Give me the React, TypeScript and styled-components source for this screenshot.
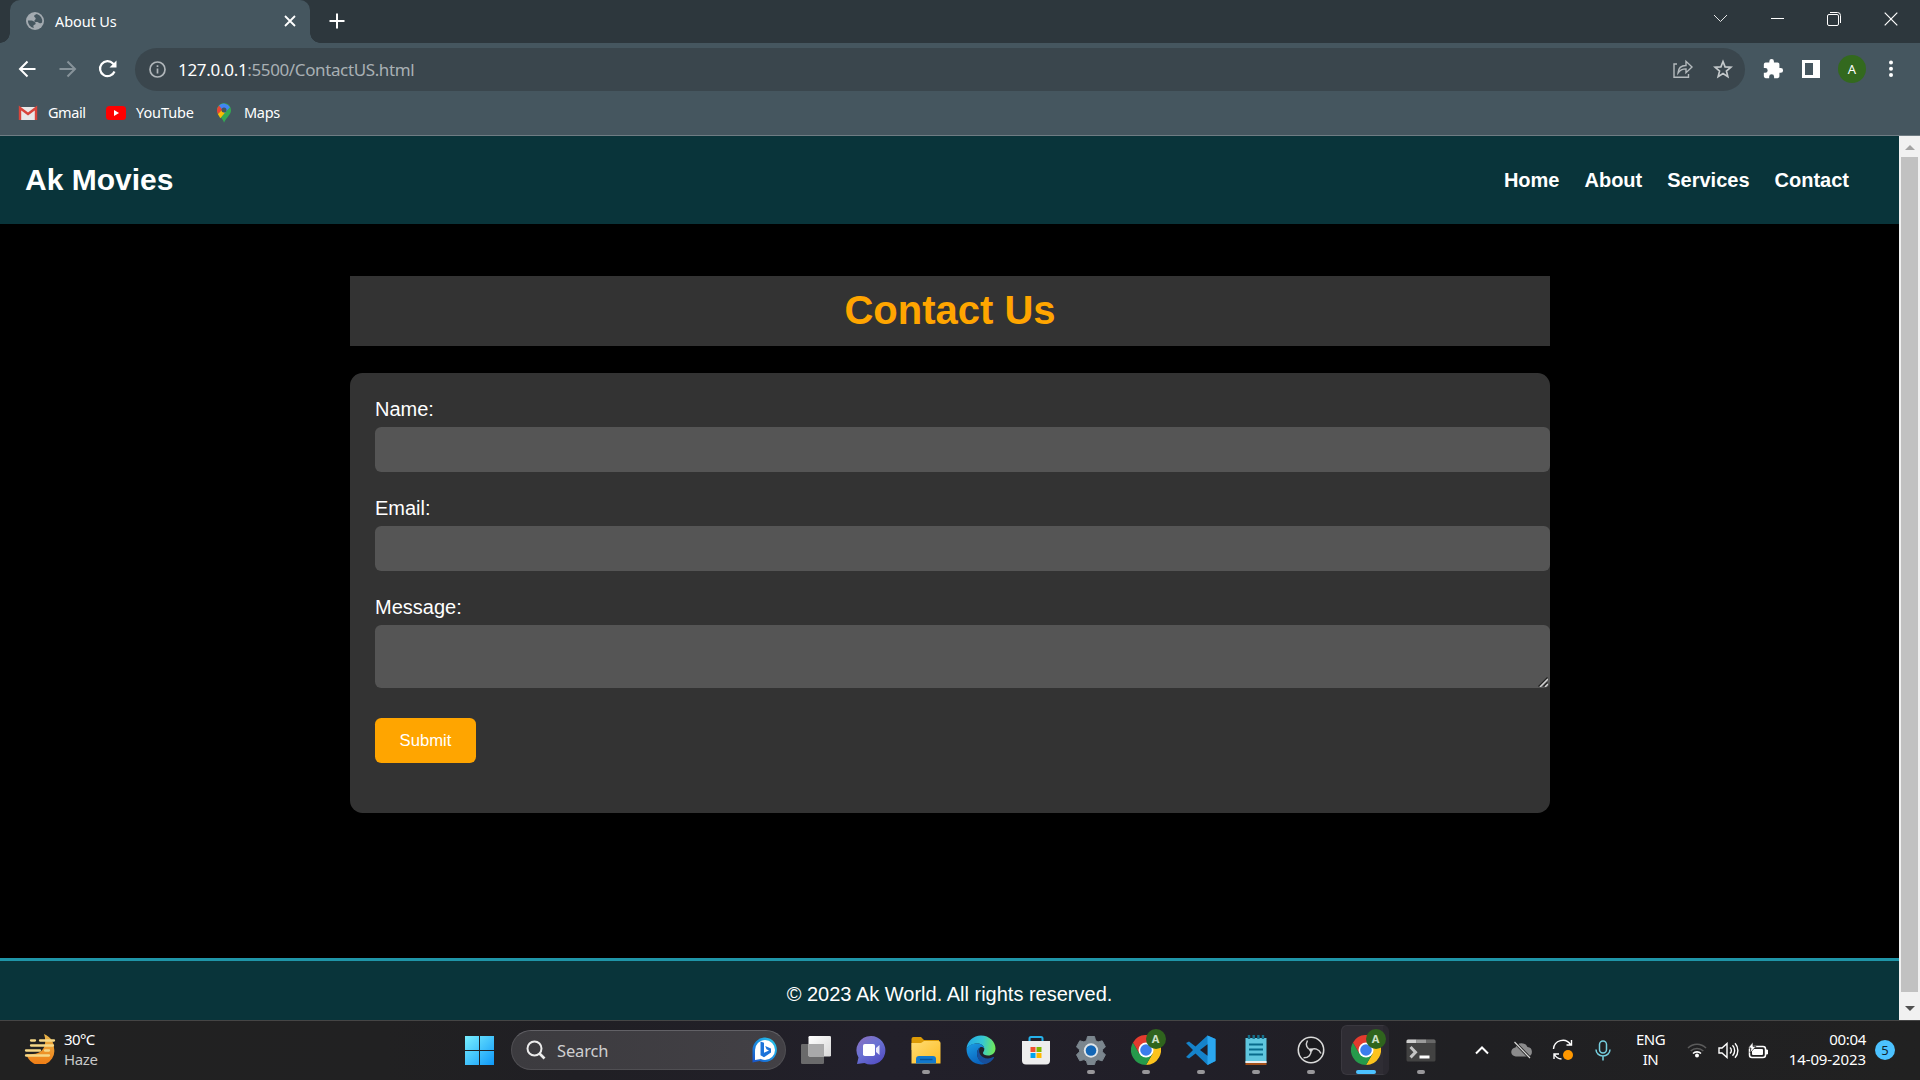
import React from "react";
import styled, { createGlobalStyle } from "styled-components";

const ui = `"Noto Sans", "Open Sans", sans-serif`;
const arial = `"Liberation Sans", Arial, sans-serif`;

const Global = createGlobalStyle`
  html, body, #root { margin: 0; height: 100%; background: #000; overflow: hidden; }
  *, *::before, *::after { box-sizing: border-box; }
  svg { display: block; flex: none; }
`;

const Screen = styled.div`
  width: 1920px;
  height: 1080px;
  display: flex;
  flex-direction: column;
  overflow: hidden;
  font-family: ${ui};
`;

const Text = styled.span<{ $size: number; $track?: number; $color?: string; $line?: number; $lift?: number }>`
  font-size: ${(p) => p.$size}px;
  letter-spacing: ${(p) => p.$track ?? 0}px;
  color: ${(p) => p.$color ?? "#fff"};
  line-height: ${(p) => p.$line ?? 20}px;
  margin-top: ${(p) => -(p.$lift ?? 0)}px;
  white-space: nowrap;
`;

/* Browser chrome */
const TabStrip = styled.div`
  height: 43px;
  flex: none;
  display: flex;
  align-items: stretch;
  background: #2d373d;
`;
const TabCurve = styled.span<{ $side: "left" | "right" }>`
  width: 10px;
  height: 10px;
  align-self: flex-end;
  background: radial-gradient(circle at ${(p) => (p.$side === "left" ? "0 0" : "100% 0")}, transparent 9.5px, #45565f 10px);
`;
const Tab = styled.div`
  width: 300px;
  border-radius: 10px 10px 0 0;
  background: #45565f;
  display: flex;
  align-items: center;
  padding: 0 14px 1px 16px;
`;
const TabTitle = styled.div`
  flex: 1;
  display: flex;
  padding-left: 11px;
`;
const NewTab = styled.div`
  display: flex;
  align-items: center;
  padding: 0 0 1px 9px;
`;
const WindowButtons = styled.div`
  margin-left: auto;
  display: flex;
  height: 37px;
  align-items: center;
  padding-right: 22px;
  gap: 43px;
`;
const Toolbar = styled.div`
  height: 52px;
  flex: none;
  display: flex;
  align-items: center;
  background: #45565f;
  padding: 0 0 0 17px;
`;
const NavButtons = styled.div`
  width: 118px;
  display: flex;
  gap: 18px;
  padding-bottom: 1px;
`;
const Omnibox = styled.div`
  width: 1610px;
  height: 43px;
  border-radius: 22px;
  background: #3a464d;
  display: flex;
  align-items: center;
  padding: 0 12px 0 14px;
`;
const Url = styled.div`
  display: flex;
  padding: 1px 0 0 12px;
  flex: 1;
`;
const OmniActions = styled.div`
  display: flex;
  align-items: center;
  gap: 20px;
`;
const ToolActions = styled.div`
  display: flex;
  align-items: center;
  padding-left: 17px;
`;
const ToolIcon = styled.span<{ $gap: number }>`
  margin-right: ${(p) => p.$gap}px;
`;
const Avatar = styled.span`
  width: 28px;
  height: 28px;
  border-radius: 50%;
  background: #33691e;
  display: flex;
  align-items: center;
  justify-content: center;
  margin: 0 16px 0 17px;
`;
const Bookmarks = styled.div`
  height: 41px;
  flex: none;
  background: #45565f;
  border-bottom: 1px solid #6f7c83;
  display: flex;
  align-items: center;
  padding: 0 0 5px 18px;
`;
const Bookmark = styled.div<{ $width: number }>`
  width: ${(p) => p.$width}px;
  display: flex;
  align-items: center;
  gap: 10px;
`;

/* Web page */
const Viewport = styled.div`
  height: 884px;
  flex: none;
  display: flex;
  background: #000;
`;
const Page = styled.div`
  width: 1899px;
  display: flex;
  flex-direction: column;
  font-family: ${arial};
  color: #fff;
`;
const SiteHeader = styled.header`
  height: 88px;
  background: #09343a;
  display: flex;
  align-items: center;
  justify-content: space-between;
  padding: 0 50px 0 25px;
`;
const Brand = styled.h1`
  margin: 0;
  font-size: 30px;
  line-height: 36px;
`;
const Menu = styled.nav`
  display: flex;
  gap: 25px;
`;
const MenuLink = styled.a`
  font-size: 20px;
  font-weight: 700;
  line-height: 24px;
  color: #fff;
`;
const Main = styled.main`
  flex: 1;
  width: 1200px;
  margin-left: 350px;
  padding-top: 52px;
`;
const PageTitle = styled.h2`
  margin: 0 0 27px;
  height: 70px;
  background: #333;
  color: orange;
  font-size: 40px;
  line-height: 69px;
  text-align: center;
`;
const Form = styled.form`
  height: 440px;
  border-radius: 12.5px;
  background: #333;
  padding: 25px 0 0 25px;
  display: flex;
  flex-direction: column;
  align-items: flex-start;
`;
const Label = styled.label`
  font-size: 20px;
  line-height: 23px;
  margin-bottom: 6px;
`;
const Input = styled.input`
  width: 1175px;
  height: 45px;
  border: 0;
  border-radius: 6.25px;
  background: #555;
  margin: 0 0 25px;
`;
const MessageField = styled.div`
  position: relative;
  height: 63px;
  margin-bottom: 30px;
`;
const MessageBox = styled.textarea`
  display: block;
  width: 1175px;
  height: 63px;
  border: 0;
  border-radius: 6.25px;
  background: #555;
  margin: 0;
  resize: none;
`;
const Grip = styled.svg`
  position: absolute;
  right: 2px;
  bottom: 1px;
`;
const Submit = styled.button`
  width: 101px;
  height: 45px;
  border: 0;
  padding: 0;
  border-radius: 6.25px;
  background: orange;
  color: #fff;
  font: 16.67px ${arial};
`;
const SiteFooter = styled.footer`
  height: 62px;
  border-top: 3px solid #1f95a8;
  background: #09343a;
  font-size: 20px;
  line-height: 23px;
  padding-top: 22px;
  text-align: center;
`;
const Scrollbar = styled.div`
  width: 21px;
  background: #f1f1f1;
  display: flex;
  flex-direction: column;
  align-items: center;
  padding-right: 0;
`;
const ScrollArrow = styled.span<{ $h: number; $drop?: number }>`
  height: ${(p) => p.$h}px;
  display: flex;
  align-items: center;
  padding-top: ${(p) => p.$drop ?? 0}px;
`;
const Thumb = styled.span`
  width: 17px;
  height: 835px;
  background: #c1c1c1;
`;

/* Taskbar */
const Taskbar = styled.div`
  height: 60px;
  flex: none;
  border-top: 1px solid #454545;
  background: linear-gradient(90deg, #212121 0, #212122 20%, #201f24 30%, #22202a 46%, #211f28 62%, #202023 76%, #212121 100%);
  display: flex;
`;
const Weather = styled.div`
  width: 464px;
  display: flex;
  padding: 8px 0 0 24px;
  gap: 8px;
`;
const WeatherIcon = styled.span`
  padding-top: 3px;
`;
const Stack = styled.div<{ $align: string }>`
  display: flex;
  flex-direction: column;
  align-items: ${(p) => p.$align};
`;
const StartSlot = styled.div`
  width: 47px;
  padding-top: 14px;
`;
const SearchBox = styled.div`
  width: 275px;
  height: 40px;
  margin-top: 9px;
  border-radius: 20px;
  background: linear-gradient(90deg, #3c3b3f, #424045);
  border: 1px solid #504f53;
  border-top-color: #626166;
  display: flex;
  align-items: center;
  padding: 0 7px 0 14px;
`;
const SearchLabel = styled.div`
  flex: 1;
  display: flex;
  padding: 2px 0 0 11px;
`;
const Apps = styled.div`
  display: flex;
  padding-left: 2px;
`;
const AppButton = styled.div`
  position: relative;
  width: 55px;
  display: flex;
  flex-direction: column;
  align-items: center;
  padding-top: 14px;
`;
const ActivePlate = styled.span`
  position: absolute;
  left: 3px;
  top: 4px;
  width: 48px;
  height: 50px;
  border-radius: 6px;
  background: #2f2d34;
  border: 1px solid #3a383f;
  border-right: 6px solid #2b2930;
`;
const AppIcon = styled.span`
  position: relative;
  height: 35px;
`;
const ProfileBadge = styled.span`
  position: absolute;
  left: 15px;
  top: -6px;
  width: 20px;
  height: 20px;
  border-radius: 50%;
  background: #2f641d;
  color: #cfe0ca;
  font: 700 11px/20px ${ui};
  text-align: center;
`;
const Indicator = styled.span<{ $active?: boolean }>`
  position: relative;
  width: ${(p) => (p.$active ? 20 : 8)}px;
  height: 4px;
  border-radius: 2px;
  background: ${(p) => (p.$active ? "#4cc2ff" : "#98979a")};
`;
const Tray = styled.div`
  margin-left: auto;
  display: flex;
  height: 58px;
  align-items: center;
  padding-right: 25px;
`;
const TrayItem = styled.div<{ $width: number }>`
  width: ${(p) => p.$width}px;
  display: flex;
  justify-content: center;
`;
const Clock = styled.div`
  width: 91px;
  display: flex;
  flex-direction: column;
  align-items: flex-end;
  padding-right: 0;
`;
const TrayText = styled.div`
  height: 42px;
`;
const Notice = styled.span`
  width: 20px;
  height: 20px;
  margin-left: 9px;
  border-radius: 50%;
  background: #4cc2ff;
  color: #10242e;
  font: 13px/20px ${ui};
  text-align: center;
`;

const Globe = () => (
  <svg width="18" height="18" viewBox="0 0 18 18">
    <circle cx="9" cy="9" r="9" fill="#a3aab0" />
    <path d="M10.500 2c-1.500.4-2.800 1.200-2.600 2.500.1 1 1.700 1.100 1.500 2.300-.2 1.200-1.500 1.300-1.400 2.500.1 1 1.600.6 3 .8 1.300.2 1.500 1.300 2.800 1.200.9 0 1.600-.5 2-.8A7.200 7.200 0 0 0 10.500 2z" fill="#45565f" transform="translate(.3 0)" />
    <path d="M1.900 8.600h3.600c1.500 0 2 1 3 1.400 1 .4 1.400 1.100 1 2-.4.8-1.600.7-2 1.500-.3.700-.1 1.500.5 2.500A7.200 7.200 0 0 1 1.900 8.600z" fill="#45565f" />
  </svg>
);
const Chrome = () => (
  <svg width="30" height="30" viewBox="0 0 48 48">
    <path d="M24 12h20.800A24 24 0 0 1 24 48l10.400-18z" fill="#fcc31e" />
    <path d="M34.400 30 24 48A24 24 0 0 1 3.200 12l10.400 18z" fill="#269a4b" />
    <path d="M13.600 30 3.200 12A24 24 0 0 1 44.800 12H24z" fill="#e33b2e" />
    <circle cx="24" cy="24" r="12" fill="#fff" />
    <circle cx="24" cy="24" r="9.300" fill="#3b7ded" />
  </svg>
);
const Folder = () => (
  <svg width="30" height="30" viewBox="0 0 30 30">
    <path d="M.5 4a2 2 0 0 1 2-2h7.500l3 3H28v10H.5z" fill="#dc9a06" />
    <path d="M.5 8H10l3-2h14.500a2 2 0 0 1 2 2v20.500H.5z" fill="url(#fold)" />
    <path d="M5 28.500V24a3 3 0 0 1 3-3h14a3 3 0 0 1 3 3v4.500z" fill="#1279cc" />
    <path d="M9 24.500h12.500" stroke="#07549b" strokeWidth="1.400" />
    <defs><linearGradient id="fold" x1="0" y1="0" x2="1" y2="1"><stop stopColor="#ffdc75" /><stop offset="1" stopColor="#fdbd23" /></linearGradient></defs>
  </svg>
);
const Edge = () => (
  <svg width="30" height="30" viewBox="0 0 30 30">
    <defs>
      <linearGradient id="e1" x1="0" y1=".3" x2="1" y2=".4"><stop stopColor="#22a8e6" /><stop offset=".55" stopColor="#35c7d4" /><stop offset="1" stopColor="#70ea58" /></linearGradient>
      <linearGradient id="e2" x1="0" y1="0" x2=".5" y2="1"><stop stopColor="#1a9de4" /><stop offset="1" stopColor="#0a63bd" /></linearGradient>
    </defs>
    <path d="M.5 14C1 6 7.500.5 15 .5c8.500 0 14.500 6.500 14.500 13 0 4.500-3.500 7-7.500 7-3 0-5-1-5-2.500 0-1 1.300-1.600 1.300-4 0-3-3-5.500-6.800-5.500C6 8.500 2 11 .5 14z" fill="url(#e1)" />
    <path d="M.5 14C2 10.500 6 8.500 11.500 8.500c4 0 6.800 2.500 6.800 5.500-1-2-3-2.400-4.300-1.500-2 1.200-3 3.500-3 6 0 5.500 4.500 9.500 9.500 10-10 3.500-20-3.500-20-14.500z" fill="url(#e2)" />
    <path d="M11 18.500c0-2.400 1-4.800 3-6-2.500 4 .5 11 8 11 2 0 3.600-.6 5-1.400.7-.4 1.300.2.900.9A14.500 14.500 0 0 1 20 29c-5-.5-9-5-9-10.500z" fill="#174f9c" />
  </svg>
);
const Store = () => (
  <svg width="30" height="30" viewBox="0 0 30 30">
    <path d="M8.500 7V3.500A1.500 1.500 0 0 1 10 2h10a1.500 1.500 0 0 1 1.500 1.500V7" fill="none" stroke="#25b1ea" strokeWidth="2" />
    <path d="M1 6h28v19.500a4 4 0 0 1-4 4H5a4 4 0 0 1-4-4z" fill="#ededed" />
    <path d="M9.500 12h5v5h-5z" fill="#f1502f" /><path d="M15.500 12h5v5h-5z" fill="#7fb900" />
    <path d="M9.500 18h5v5h-5z" fill="#00a3ee" /><path d="M15.500 18h5v5h-5z" fill="#ffb800" />
  </svg>
);
const Gear = () => (
  <svg width="30" height="30" viewBox="0 0 30 30">
    <path d="M11.500 1.500h7l1 4 2.500 1.500 4.200-1.200 3.200 6-3 3v2l3 3-3.200 6-4.200-1.200-2.500 1.500-1 3.400h-7l-1-3.400L8 24.600l-4.200 1.200-3.300-6 3-3v-2l-3-3 3.300-6L8 7l2.500-1.500z" fill="#7b868e" stroke="#7b868e" strokeLinejoin="round" />
    <circle cx="15" cy="15.500" r="7.200" fill="#dfe5e9" /><circle cx="15" cy="15.500" r="5.300" fill="#1366b5" />
  </svg>
);
const Code = () => (
  <svg width="30" height="30" viewBox="0 0 30 30">
    <path d="M21.500.5 29.500 4v22l-8 4L9.500 18.500 3 23.500 0 22l7-7-7-7 3-1.500 6.500 5z" fill="#1583ca" />
    <path d="M21.500.5 29.500 4v22l-8 4z" fill="#2ba7ef" />
    <path d="M21.500 9.300 14 15l7.500 5.700z" fill="#211f28" />
  </svg>
);
const Notepad = () => (
  <svg width="30" height="30" viewBox="0 0 30 30">
    <path d="M4.500 3h21v25h-21z" fill="#5fc6de" />
    <path d="M4.500 26h21v2h-21z" fill="#e8edf0" /><path d="M4.500 28h21v2h-21z" fill="#a4501a" />
    <path d="M8 0v4M12.700 0v4M17.400 0v4M22 0v4" stroke="#15708c" strokeWidth="2.400" />
    <path d="M8 9.500h14M8 14.500h14M8 19.500h14" stroke="#086b8b" strokeWidth="2" />
  </svg>
);
const Obs = () => (
  <svg width="30" height="30" viewBox="0 0 30 30">
    <circle cx="15" cy="15" r="12.700" fill="#1b1b1e" stroke="#dadada" strokeWidth="1.600" />
    <g fill="none" stroke="#d2d2d2" strokeWidth="1.500">
      <path d="M15 15c-4-1-6-5-3.500-9.500" /><path d="M15 15c3.500-2.500 8-1 10 3.500" /><path d="M15 15c.7 4.500-2.500 8-7.500 7.800" />
    </g>
    <circle cx="15" cy="15" r="1.800" fill="#dadada" />
  </svg>
);
const Terminal = () => (
  <svg width="30" height="30" viewBox="0 0 30 30">
    <rect x=".5" y="4.500" width="29" height="22" rx="1.500" fill="#424242" />
    <path d="M.5 8V6A1.500 1.500 0 0 1 2 4.500h8.500V8z" fill="#cfcfcf" /><path d="M10.500 4.500H20V8h-9.500z" fill="#9a9a9a" /><path d="M20 4.500h8A1.500 1.500 0 0 1 29.500 6v2H20z" fill="#686868" />
    <path d="m4.500 12 5 5.200-5 5.200" fill="none" stroke="#c4c4c4" strokeWidth="3" /><path d="M13.500 20.500h10v3h-10z" fill="#fff" />
  </svg>
);
const TaskView = () => (
  <svg width="30" height="30" viewBox="0 0 30 30">
    <defs><linearGradient id="tv" x1="0" y1="0" x2="1" y2="1"><stop stopColor="#fff" /><stop offset="1" stopColor="#d8d8d8" /></linearGradient></defs>
    <rect x="0" y="9" width="23" height="20" rx="1.300" fill="#6a6a6b" />
    <rect x="7.500" y="1" width="22.500" height="20.500" rx="1.300" fill="url(#tv)" />
    <path d="M7.500 9H23v12.500H8.500a1 1 0 0 1-1-1z" fill="#a9a9aa" />
  </svg>
);
const Chat = () => (
  <svg width="30" height="30" viewBox="0 0 30 30">
    <defs><linearGradient id="ch" x1="0" y1="0" x2=".7" y2="1"><stop stopColor="#8e6fbd" /><stop offset=".5" stopColor="#6a72d3" /><stop offset="1" stopColor="#544fc4" /></linearGradient></defs>
    <path d="M15 1a14.300 14.300 0 1 1-6.500 27L1 29l1.500-6.500A14.300 14.300 0 0 1 15 1z" fill="url(#ch)" />
    <rect x="7" y="9" width="12" height="12" rx="1.800" fill="#fff" /><path d="m20 13 3.500-3v10L20 17z" fill="#e8e7fa" />
  </svg>
);
const Bing = () => (
  <svg width="26" height="26" viewBox="0 0 26 26">
    <defs><linearGradient id="bg" x1="0" y1="1" x2="1" y2="0"><stop stopColor="#1850c9" /><stop offset=".6" stopColor="#1b9de6" /><stop offset="1" stopColor="#2fd0e8" /></linearGradient></defs>
    <path d="M13 .5A12.300 12.300 0 1 1 7.500 24L.5 25.500V13A12.400 12.400 0 0 1 13 .5z" fill="url(#bg)" />
    <circle cx="13" cy="13" r="10" fill="#fff" /><path d="M3 13v10l6-1z" fill="#fff" />
    <path d="m8.500 4.500 3.500 1.300v10l5-2.300-2.500-1.200-1.300-3.300 5.800 2.500v4L12 20.300l-3.500-2z" fill="#1b73da" />
  </svg>
);
const Windows = () => (
  <svg width="31" height="31" viewBox="0 0 31 31">
    <defs><linearGradient id="win" x1="0" y1="0" x2="31" y2="31" gradientUnits="userSpaceOnUse"><stop stopColor="#7cf2ff" /><stop offset="1" stopColor="#0b95f8" /></linearGradient></defs>
    <path d="M1 1h14v14H1zM16 1h14v14H16zM1 16h14v14H1zM16 16h14v14H16z" fill="url(#win)" />
  </svg>
);
const Haze = () => (
  <svg width="32" height="32" viewBox="0 0 32 32">
    <defs><linearGradient id="hz" x1="0" y1="0" x2="0" y2="1"><stop stopColor="#e9b64a" /><stop offset="1" stopColor="#f07c14" /></linearGradient></defs>
    <path d="M20 2c7 3 10 8.500 10 14a14 14 0 0 1-27.500 6c9 1 17-1 18.500-10 .5-4 0-7-1-10z" fill="url(#hz)" />
    <g stroke="#f5d787" strokeWidth="2.300" strokeLinecap="round"><path d="M7 8.500h4M16 8.500h14M7 13.500h22M2 18.500h14M21 18.500h4M2 23.500h23" /></g>
  </svg>
);

const APPS: { icon: React.ReactNode; run?: boolean; active?: boolean; badge?: boolean }[] = [
  { icon: <TaskView /> },
  { icon: <Chat /> },
  { icon: <Folder />, run: true },
  { icon: <Edge /> },
  { icon: <Store /> },
  { icon: <Gear />, run: true },
  { icon: <Chrome />, run: true, badge: true },
  { icon: <Code />, run: true },
  { icon: <Notepad />, run: true },
  { icon: <Obs />, run: true },
  { icon: <Chrome />, run: true, active: true, badge: true },
  { icon: <Terminal />, run: true },
];

export default function App() {
  return (
    <Screen>
      <Global />
      <TabStrip>
        <TabCurve $side="left" />
        <Tab>
          <Globe />
          <TabTitle><Text $size={14.5} $track={-0.1} $lift={1}>About Us</Text></TabTitle>
          <svg width="12" height="12" viewBox="0 0 12 12" stroke="#fff" strokeWidth="1.800"><path d="m1 1 10 10M11 1 1 11" /></svg>
        </Tab>
        <TabCurve $side="right" />
        <NewTab>
          <svg width="16" height="16" viewBox="0 0 16 16" stroke="#fff" strokeWidth="2"><path d="M8 .5v15M.5 8h15" /></svg>
        </NewTab>
        <WindowButtons>
          <svg width="15" height="15" viewBox="0 0 15 15" fill="none" stroke="#e4e6e7"><path d="m1 4 6.500 6.500L14 4" /></svg>
          <svg width="13" height="13" viewBox="0 0 13 13" stroke="#fff"><path d="M0 6.500h13" /></svg>
          <svg width="14" height="14" viewBox="0 0 14 14" fill="none" stroke="#fff"><rect x=".5" y="2.500" width="11" height="11" rx="1.500" /><path d="M3 .5h7.500a3 3 0 0 1 3 3V11" /></svg>
          <svg width="14" height="14" viewBox="0 0 14 14" stroke="#fff" strokeWidth="1.200"><path d="m.7.700 12.600 12.600M13.300.7.700 13.300" /></svg>
        </WindowButtons>
      </TabStrip>
      <Toolbar>
        <NavButtons>
          <svg width="22" height="22" viewBox="0 0 22 22" fill="none" stroke="#fff" strokeWidth="2"><path d="M18.500 11H3.500M10.500 3.500 3 11l7.500 7.500" /></svg>
          <svg width="22" height="22" viewBox="0 0 22 22" fill="none" stroke="#87939a" strokeWidth="2"><path d="M2.500 11h15M10.500 3.500 18 11l-7.500 7.500" /></svg>
          <svg width="22" height="22" viewBox="0 0 22 22" fill="none" stroke="#fff" strokeWidth="2.200"><path d="M17.500 13.500A7.500 7.500 0 1 1 16 5.500l2 2" /><path d="M19.500 2.500v7h-7z" fill="#fff" stroke="none" /></svg>
        </NavButtons>
        <Omnibox>
          <svg width="17" height="17" viewBox="0 0 17 17" fill="none" stroke="#b0b6ba" strokeWidth="1.700"><circle cx="8.500" cy="8.500" r="7.500" /><path d="M8.500 7.500v5M8.500 4.300V6" /></svg>
          <Url>
            <Text $size={17} $track={-0.3}>127.0.0.1</Text>
            <Text $size={17} $track={-0.38} $color="#a9b0b4">:5500/ContactUS.html</Text>
          </Url>
          <OmniActions>
            <svg width="20" height="20" viewBox="0 0 20 20" fill="none" stroke="#b4babd" strokeWidth="1.400"><path d="M4 5H1v13.300h14.500V15" /><path d="M5 14c.3-5 3-7.500 8-7.500V2.300L19 8l-6 5.700v-3.800c-3.500 0-6 1-8 4.100z" /></svg>
            <svg width="20" height="20" viewBox="0 0 24 24" fill="none" stroke="#c4c9cb" strokeWidth="2"><path d="m12 3 2.500 6.500 7 .4-5.400 4.500 1.700 6.800-5.800-3.700-5.800 3.700 1.700-6.800L2.500 9.900l7-.4z" /></svg>
          </OmniActions>
        </Omnibox>
        <ToolActions>
          <ToolIcon $gap={18}>
            <svg width="22" height="22" viewBox="0 0 24 24" fill="#fff"><path d="M20.500 11H19V7a2 2 0 0 0-2-2h-4V3.500a2.500 2.500 0 0 0-5 0V5H4a2 2 0 0 0-2 2v3.800h1.500a2.700 2.700 0 0 1 0 5.400H2V20a2 2 0 0 0 2 2h3.800v-1.500a2.700 2.700 0 0 1 5.400 0V22H17a2 2 0 0 0 2-2v-4h1.500a2.500 2.500 0 0 0 0-5z" /></svg>
          </ToolIcon>
          <ToolIcon $gap={1}>
            <svg width="18" height="18" viewBox="0 0 18 18"><path d="M0 0h18v18H0zM3 3v12h8V3z" fill="#fff" fillRule="evenodd" /></svg>
          </ToolIcon>
          <Avatar><Text $size={13}>A</Text></Avatar>
          <svg width="18" height="18" viewBox="0 0 18 18" fill="#fff"><circle cx="9" cy="2.500" r="2" /><circle cx="9" cy="8.800" r="2" /><circle cx="9" cy="15.100" r="2" /></svg>
        </ToolActions>
      </Toolbar>
      <Bookmarks>
        <Bookmark $width={88}>
          <svg width="20" height="16" viewBox="0 0 20 16"><path d="M1 2h18v13H1z" fill="#e8e8e8" /><path d="M2 15V3l8 6 8-6v12" fill="none" stroke="#d8453b" strokeWidth="2.400" /></svg>
          <Text $size={14.5} $track={-0.45} $lift={2}>Gmail</Text>
        </Bookmark>
        <Bookmark $width={108}>
          <svg width="20" height="14" viewBox="0 0 20 14"><rect width="20" height="14" rx="3.500" fill="#f00" /><path d="M8 4v6l5-3z" fill="#fff" /></svg>
          <Text $size={14.5} $track={-0.1} $lift={2}>YouTube</Text>
        </Bookmark>
        <Bookmark $width={80}>
          <svg width="20" height="20" viewBox="0 0 20 20"><path d="M3 7.500C3 3 6 .3 10 .3S17 3 17 7.500c0 4-4 6-7 12.200-1-5-7-7.200-7-12.200z" fill="#34a853" /><path d="m3.800 11 5-5.500 3 3.300-5.500 6.500z" fill="#fbbc04" /><path d="M3 7.500A7 7 0 0 1 5 2.600l4 3.500L3.900 11A7 7 0 0 1 3 7.500z" fill="#ea4335" /><path d="M5 2.600A7 7 0 0 1 16 4.200L10.500 10 7 5z" fill="#4285f4" /><circle cx="10" cy="7" r="2.500" fill="#45565f" /></svg>
          <Text $size={14.5} $track={-0.3} $lift={2}>Maps</Text>
        </Bookmark>
      </Bookmarks>

      <Viewport>
        <Page>
          <SiteHeader>
            <Brand>Ak Movies</Brand>
            <Menu>
              {["Home", "About", "Services", "Contact"].map((t) => <MenuLink key={t}>{t}</MenuLink>)}
            </Menu>
          </SiteHeader>
          <Main>
            <PageTitle>Contact Us</PageTitle>
            <Form onSubmit={(e) => e.preventDefault()}>
              <Label htmlFor="name">Name:</Label>
              <Input id="name" />
              <Label htmlFor="email">Email:</Label>
              <Input id="email" />
              <Label htmlFor="message">Message:</Label>
              <MessageField>
                <MessageBox id="message" />
                <Grip width="10" height="10" viewBox="0 0 10 10">
                  <path d="M.5 9.500l9-9M5.500 9.500l4-4" stroke="#222" strokeWidth="1.300" />
                  <path d="M2 10l8-8M7 10l3-3" stroke="#d0d0d0" strokeWidth="1.500" />
                </Grip>
              </MessageField>
              <Submit>Submit</Submit>
            </Form>
          </Main>
          <SiteFooter>© 2023 Ak World. All rights reserved.</SiteFooter>
        </Page>
        <Scrollbar>
          <ScrollArrow $h={21} $drop={2}><svg width="10" height="5" viewBox="0 0 10 5"><path d="m0 5 5-5 5 5z" fill="#a3a3a3" /></svg></ScrollArrow>
          <Thumb />
          <ScrollArrow $h={28} $drop={4}><svg width="10" height="5" viewBox="0 0 10 5"><path d="m0 0 5 5 5-5z" fill="#505050" /></svg></ScrollArrow>
        </Scrollbar>
      </Viewport>

      <Taskbar>
        <Weather>
          <WeatherIcon><Haze /></WeatherIcon>
          <Stack $align="flex-start">
            <Text $size={15} $track={-0.6}>30°C</Text>
            <Text $size={15} $track={-0.35} $color="#c8c8c8">Haze</Text>
          </Stack>
        </Weather>
        <StartSlot><Windows /></StartSlot>
        <SearchBox>
          <svg width="20" height="20" viewBox="0 0 20 20" fill="none" stroke="#ececec" strokeWidth="2"><circle cx="8.500" cy="8.500" r="7" /><path d="m13.500 13.500 5 5" strokeWidth="2.600" /></svg>
          <SearchLabel><Text $size={16.5} $track={-0.15} $color="#cfcfd1" $line={22}>Search</Text></SearchLabel>
          <Bing />
        </SearchBox>
        <Apps>
          {APPS.map((a, i) => (
            <AppButton key={i}>
              {a.active && <ActivePlate />}
              <AppIcon>{a.icon}{a.badge && <ProfileBadge>A</ProfileBadge>}</AppIcon>
              {a.run && <Indicator $active={a.active} />}
            </AppButton>
          ))}
        </Apps>
        <Tray>
          <TrayItem $width={38}><svg width="14" height="9" viewBox="0 0 14 9" fill="none" stroke="#fff" strokeWidth="2"><path d="m1 7.500 6-6 6 6" /></svg></TrayItem>
          <TrayItem $width={42}><svg width="22" height="18" viewBox="0 0 22 18"><path d="M5 15.500a4.500 4.500 0 0 1-.5-9A6.500 6.500 0 0 1 16.500 6a4.800 4.800 0 0 1 .5 9.500z" fill="#8b8b8c" /><path d="M4 1.500 19 17" stroke="#212121" strokeWidth="3" /><path d="M3.500 1 19 17" stroke="#d9d9d9" strokeWidth="1.200" /></svg></TrayItem>
          <TrayItem $width={40}><svg width="22" height="22" viewBox="0 0 22 22" fill="none" stroke="#fff" strokeWidth="1.400"><path d="M1.500 10a9.300 9.300 0 0 1 17-4.500M19.500 1v5h-5M2 20v-5h5M2.500 15.500a9 9 0 0 0 7 4.500" /><circle cx="16" cy="16" r="5" fill="#ff9800" stroke="none" /></svg></TrayItem>
          <TrayItem $width={40}><svg width="16" height="21" viewBox="0 0 16 21" fill="none" stroke="#76cfdf" strokeWidth="1.500"><rect x="4.500" y="1" width="7" height="12" rx="3.500" /><path d="M1 9.500a7 6.500 0 0 0 14 0M8 16v4.500" /></svg></TrayItem>
          <TrayItem $width={55}>
            <TrayText><Stack $align="center"><Text $size={15} $track={-0.5}>ENG</Text><Text $size={15} $track={-0.4}>IN</Text></Stack></TrayText>
          </TrayItem>
          <TrayItem $width={37}><svg width="20" height="16" viewBox="0 0 20 16" fill="none" strokeWidth="1.600"><path d="M1 6a12.700 12.700 0 0 1 18 0M3.700 9a9 9 0 0 1 12.600 0" stroke="#5b5b5b" /><path d="M6 11.500a5.700 5.700 0 0 1 8 0" stroke="#fff" /><circle cx="10" cy="13.500" r="2" fill="#fff" /></svg></TrayItem>
          <TrayItem $width={26}><svg width="21" height="17" viewBox="0 0 21 17" fill="none" stroke="#fff" strokeWidth="1.400"><path d="M1 6v5h3l5 4.500v-14L4 6zM12 5.500a4 4 0 0 1 0 6M14.500 3.300a7.300 7.300 0 0 1 0 10.400M17 1.300a10.500 10.500 0 0 1 0 14.400" /></svg></TrayItem>
          <TrayItem $width={34}><svg width="21" height="17" viewBox="0 0 21 17"><rect x="1.500" y="4.500" width="16" height="11" rx="2.500" fill="none" stroke="#fff" strokeWidth="1.500" /><rect x="4" y="7" width="11" height="6" rx="1" fill="#fff" /><path d="M18 8h1.500v4H18z" fill="#fff" stroke="#fff" /><path d="M5 0 0 6h3l-1 5 6-6.500H5z" fill="#fff" stroke="#212121" strokeWidth=".7" /></svg></TrayItem>
          <Clock><TrayText><Stack $align="flex-end"><Text $size={15} $track={-0.3}>00:04</Text><Text $size={15} $track={-0.1}>14-09-2023</Text></Stack></TrayText></Clock>
          <Notice>5</Notice>
        </Tray>
      </Taskbar>
    </Screen>
  );
}
